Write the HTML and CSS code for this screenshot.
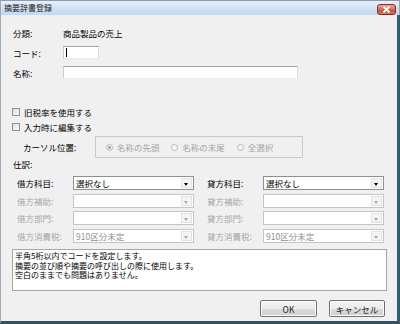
FILE: index.html
```html
<!DOCTYPE html>
<html lang="ja">
<head>
<meta charset="utf-8">
<link rel="stylesheet" href="styles.css">
</head>
<body>
<div class="window">
  <div class="titlebar">
    <span class="title">摘要辞書登録</span>
    <span class="close"><svg width="9" height="7" viewBox="0 0 9 7"><path d="M1.5 0.5 L7.5 6.5 M7.5 0.5 L1.5 6.5" stroke="#fff" stroke-width="1.8"/></svg></span>
  </div>
  <div class="content">
    <div class="row r-class"><span class="lbl">分類:</span><span>商品製品の売上</span></div>
    <div class="row r-code"><span class="lbl">コード:</span><span class="input code"><span class="caret"></span></span></div>
    <div class="row r-name"><span class="lbl">名称:</span><span class="input name"></span></div>
    <div class="row r-chk1"><span class="chk"></span><span>旧税率を使用する</span></div>
    <div class="row r-chk2"><span class="chk"></span><span>入力時に編集する</span></div>
    <div class="row r-cursor">
      <span class="lbl2">カーソル位置:</span>
      <div class="group">
        <span class="radio-item"><span class="radio on"></span>名称の先頭</span>
        <span class="radio-item"><span class="radio"></span>名称の末尾</span>
        <span class="radio-item"><span class="radio"></span>全選択</span>
      </div>
    </div>
    <div class="row r-journal"><span>仕訳:</span></div>
    <div class="journal">
      <span class="jl">借方科目:</span><span class="sel"><span class="val">選択なし</span><span class="arrow"></span></span>
      <span class="jl jr">貸方科目:</span><span class="sel"><span class="val">選択なし</span><span class="arrow"></span></span>
      <span class="jl dis">借方補助:</span><span class="sel dis"><span class="val"></span><span class="arrow"></span></span>
      <span class="jl jr dis">貸方補助:</span><span class="sel dis"><span class="val"></span><span class="arrow"></span></span>
      <span class="jl dis">借方部門:</span><span class="sel dis"><span class="val"></span><span class="arrow"></span></span>
      <span class="jl jr dis">貸方部門:</span><span class="sel dis"><span class="val"></span><span class="arrow"></span></span>
      <span class="jl dis">借方消費税:</span><span class="sel dis"><span class="val">910区分未定</span><span class="arrow"></span></span>
      <span class="jl jr dis">貸方消費税:</span><span class="sel dis"><span class="val">910区分未定</span><span class="arrow"></span></span>
    </div>
    <div class="memo">半角5桁以内でコードを設定します。<br>摘要の並び順や摘要の呼び出しの際に使用します。<br>空白のままでも問題はありません。</div>
    <div class="buttons">
      <span class="btn ok">OK</span>
      <span class="btn cancel">キャンセル</span>
    </div>
  </div>
</div>
</body>
</html>
```
FILE: styles.css
```css
* { box-sizing: border-box; }
html, body { margin: 0; padding: 0; }
body {
  width: 400px;
  height: 324px;
  overflow: hidden;
  font-family: "Noto Sans CJK JP", "Noto Sans", sans-serif;
  font-size: 8.5px;
  color: #000;
}
.window {
  width: 400px;
  height: 324px;
  background: #f0f0f0;
  display: flex;
  flex-direction: column;
}
.titlebar {
  height: 15px;
  flex: none;
  border-top: 1px solid #8d9cac;
  border-left: 1px solid #9aaabb;
  border-right: 1px solid #9aaabb;
  background: linear-gradient(#e6eff9, #c2d7ee);
  display: flex;
  align-items: center;
  padding-left: 3px;
  padding-right: 3px;
  position: relative;
}
.title {
  font-size: 8px;
  color: #1a1a1a;
  line-height: 1;
}
.close {
  margin-left: auto;
  width: 19px;
  height: 11px;
  margin-top: 2px;
  border: 1px solid #7d3326;
  border-radius: 3px;
  background: linear-gradient(#eba99b, #d46c58 50%, #c24a35 51%, #d2775f);
  display: flex;
  align-items: center;
  justify-content: center;
}
.content {
  flex: 1;
  border-left: 1px solid #a3adb8;
  border-right: 3px solid #2f5f72;
  border-bottom: 3px solid #2a5566;
  padding: 0 0 0 12px;
  display: flex;
  flex-direction: column;
}
.row {
  display: flex;
  align-items: center;
  flex: none;
  white-space: nowrap;
}
.lbl { width: 50px; }
.r-class { height: 12px; margin-top: 12px; }
.r-code { height: 13px; margin-top: 7px; }
.r-name { height: 13px; margin-top: 7px; }
.r-chk1 { height: 12px; margin-top: 27px; }
.r-chk2 { height: 12px; margin-top: 3px; }
.r-cursor { height: 22px; margin-top: 3px; }
.r-journal { height: 12px; }
.input {
  display: block;
  height: 13px;
  background: #fff;
  border: 1px solid;
  border-color: #a2a2a2 #dedede #e9e9e9 #cfcfcf;
  position: relative;
}
.input.code { width: 36px; }
.input.name { width: 235px; }
.caret {
  position: absolute;
  left: 2px;
  top: 1px;
  width: 1px;
  height: 9px;
  background: #000;
}
.chk {
  width: 8px;
  height: 8px;
  border: 1px solid #8e8f8f;
  background: linear-gradient(135deg, #dcdcdc, #fdfdfd);
  margin-left: -1px;
  margin-right: 4px;
}
.lbl2 { width: 82px; padding-left: 10px; }
.group {
  width: 208px;
  height: 22px;
  border: 1px solid #cacaca;
  display: flex;
  align-items: center;
  padding-left: 10px;
  color: #a6a6a6;
}
.radio-item {
  display: flex;
  align-items: center;
  width: 71px;
}
.radio {
  width: 7px;
  height: 7px;
  border: 1px solid #b8b8b8;
  border-radius: 50%;
  margin-right: 4px;
  background: #f6f6f6;
  position: relative;
}
.radio.on::after {
  content: "";
  position: absolute;
  left: 1px;
  top: 1px;
  width: 3px;
  height: 3px;
  border-radius: 50%;
  background: #a0a0a0;
}
.journal {
  display: grid;
  grid-template-columns: 56px 121px 56px 121px;
  grid-auto-rows: 14px;
  row-gap: 3.5px;
  margin-top: 6px;
  padding-left: 4px;
}
.jl { display: flex; align-items: center; }
.jr { margin-left: 13px; margin-right: -13px; }
.dis { color: #a6a6a6; }
.sel {
  display: flex;
  background: #fff;
  border: 1px solid #8f8f8f;
  height: 14px;
}
.sel.dis { border-color: #c4c4c4; }
.jr + .sel { margin-left: 13px; margin-right: -13px; }
.val {
  flex: 1;
  display: flex;
  align-items: center;
  padding-left: 2px;
  color: #000;
}
.sel.dis .val { color: #8e8e8e; }
.arrow {
  width: 11px;
  margin: 1px;
  border: 1px solid #e2e2e2;
  background: #f4f4f4;
  position: relative;
}
.arrow::before {
  content: "";
  position: absolute;
  left: 2px;
  top: 4px;
  border-left: 2.5px solid transparent;
  border-right: 2.5px solid transparent;
  border-top: 3px solid #000;
}
.sel.dis .arrow::before { border-top-color: #a8a8a8; }
.memo {
  margin-top: 6.5px;
  margin-left: -1px;
  width: 375px;
  height: 42px;
  background: #fff;
  border: 1px solid #a6a6a6;
  padding: 1px 2px;
  font-size: 8px;
  line-height: 9.5px;
  white-space: nowrap;
}
.buttons {
  margin-top: 9px;
  display: flex;
  gap: 12px;
  padding-left: 247px;
}
.btn {
  height: 17px;
  border: 1px solid #707070;
  border-radius: 2px;
  background: linear-gradient(#f3f3f3, #ebebeb 50%, #dddddd 51%, #cfcfcf);
  display: flex;
  align-items: center;
  justify-content: center;
  color: #222;
  box-shadow: inset 0 0 0 1px #fbfbfb;
}
.ok { width: 57px; }
.cancel { width: 56px; }
```
